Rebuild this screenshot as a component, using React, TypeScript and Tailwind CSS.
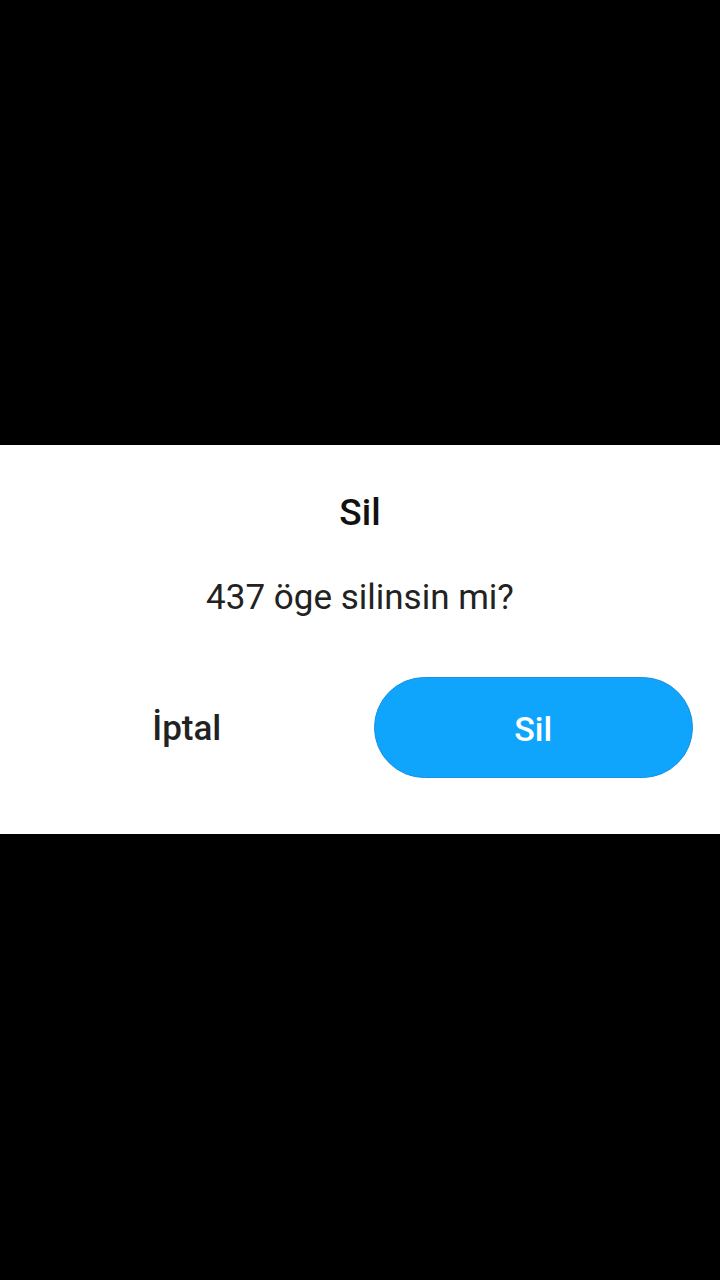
import React from "react";

const App: React.FC = () => {
  return (
    <div
      className="w-[720px] h-[1280px] bg-black flex flex-col"
      style={{ fontFamily: "Roboto, 'Noto Sans', sans-serif" }}
    >
      <div className="h-[445px]" />
      <div className="bg-white h-[389px] flex flex-col pt-[46px]">
        <h2 className="text-center text-[37px] leading-[44px] font-medium text-[#111]">Sil</h2>
        <p className="mt-[43px] text-center text-[35px] leading-[40px] text-[#222]">
          437 öge silinsin mi?
        </p>
        <div className="mt-[59px] grid grid-cols-2 gap-[27px] px-[27px]">
          <button className="h-[101px] pt-[4px] text-[35px] font-medium text-[#222]">İptal</button>
          <button className="h-[101px] pt-[4px] rounded-full bg-[#0fa5fd] border border-[#1a90e6] text-[34px] font-medium text-white">
            Sil
          </button>
        </div>
      </div>
    </div>
  );
};

export default App;
